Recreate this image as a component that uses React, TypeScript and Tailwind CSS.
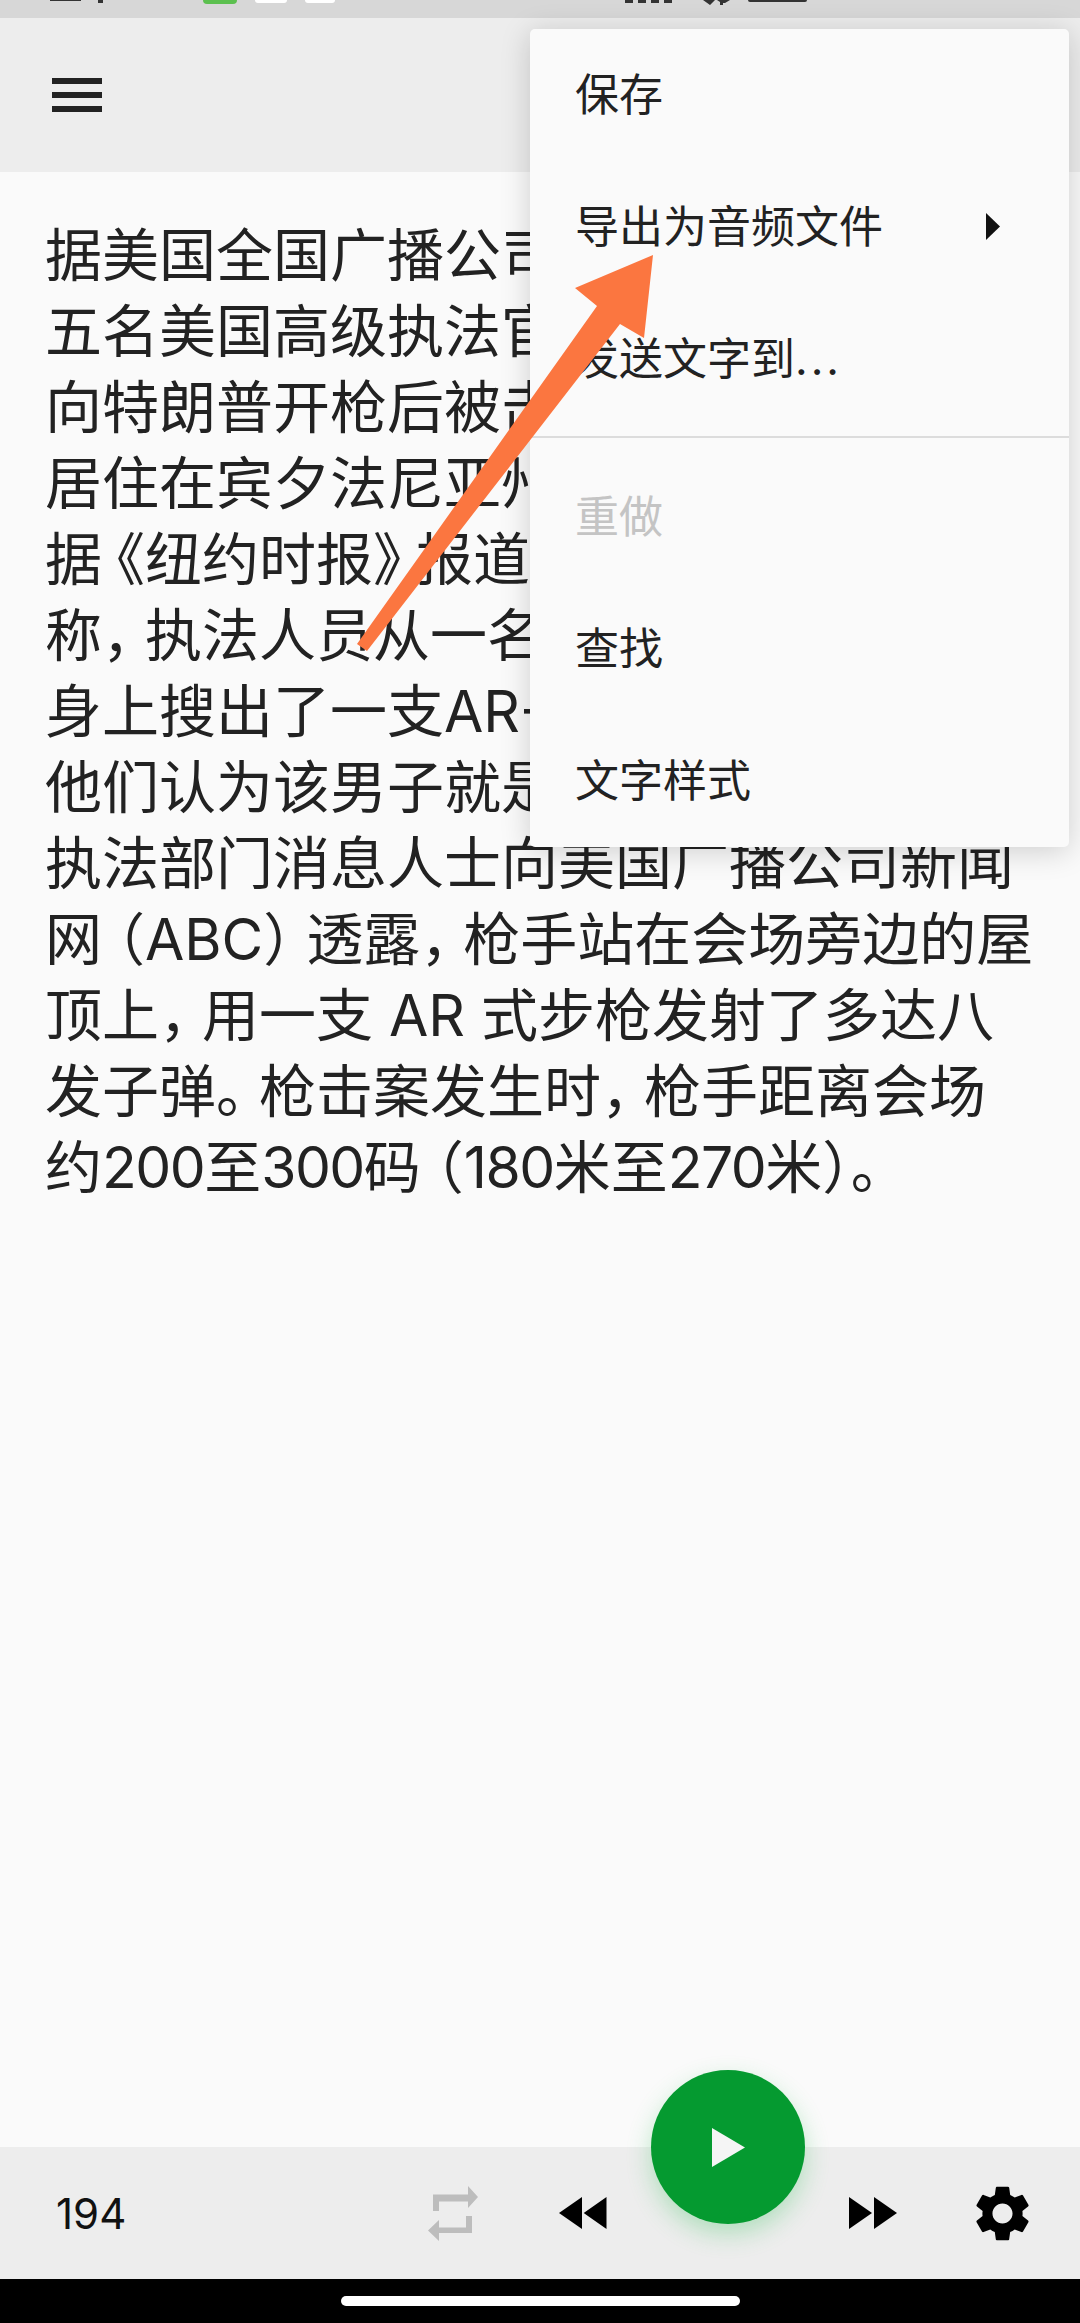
import type { ReactNode } from "react";
import { MdSettings } from "react-icons/md";

// only the part of each line that shows beside the menu
const lines = [
  "据美国全国广播公司",
  "五名美国高级执法官",
  "向特朗普开枪后被击",
  "居住在宾夕法尼亚州",
  "据《纽约时报》报道",
  "称，执法人员从一名",
  "身上搜出了一支AR-",
  "他们认为该男子就是",
  "执法部门消息人士向美国广播公司新闻",
  "网（ABC）透露，枪手站在会场旁边的屋",
  "顶上，用一支 AR 式步枪发射了多达八",
  "发子弹。枪击案发生时，枪手距离会场",
  "约200至300码（180米至270米）。",
];

const font = "font-['Inter','Noto_Sans_CJK_SC',sans-serif]";

// the phone's font sets CJK punctuation and digits tighter than ours
function TextLine({ text }: { text: string }) {
  const parts = text.split(/(）。|[，。《》（）]|\d+)/);
  return (
    <div className="whitespace-nowrap">
      {parts.map((part, i) => {
        if (part === "《" || part === "（") {
          return (
            <span key={i} className="ml-[-14px]">
              {part}
            </span>
          );
        }
        if (part === "，" || part === "。" || part === "》" || part === "）") {
          return (
            <span key={i} className="tracking-[-14px]">
              {part}
            </span>
          );
        }
        if (/^\d+$/.test(part)) {
          return (
            <span key={i} className="tracking-[-1.5px]">
              {part}
            </span>
          );
        }
        return <span key={i}>{part}</span>;
      })}
    </div>
  );
}

function MenuItem({ label, disabled, submenu }: { label: ReactNode; disabled?: boolean; submenu?: boolean }) {
  return (
    <div className={`flex h-[132px] items-center justify-between pl-[45px] pr-[69px] text-[44px] ${disabled ? "text-[#c4c4c4]" : "text-[#222]"}`}>
      <span>{label}</span>
      {submenu && (
        <svg width="14" height="27" viewBox="0 0 14 27" className="mt-[-2px]">
          <path d="M0 0 L14 13.5 L0 27 Z" fill="#111" />
        </svg>
      )}
    </div>
  );
}

function StatusBar() {
  return (
    <div className="flex h-[18px] items-start bg-[#d7d7d7]">
      <div className="ml-[50px] h-[1px] w-[31px] bg-[#333]" />
      <div className="ml-[17px] h-[3px] w-[5px] bg-[#333]" />
      <div className="ml-[100px] h-[4px] w-[34px] rounded-b-[6px] bg-[#5cc04f]" />
      <div className="ml-[18px] h-[3px] w-[32px] rounded-b-[6px] bg-white" />
      <div className="ml-[18px] h-[3px] w-[30px] rounded-b-[6px] bg-white" />
      <div className="ml-[290px] flex w-[47px] justify-between">
        <div className="h-[3px] w-[8px] bg-[#333]" />
        <div className="h-[3px] w-[8px] bg-[#333]" />
        <div className="h-[3px] w-[8px] bg-[#333]" />
        <div className="h-[3px] w-[8px] bg-[#333]" />
      </div>
      <svg width="27" height="5" viewBox="0 0 27 5" className="ml-[31px]">
        <path d="M0 0 H12 L7 5 Z M14 0 H27 L22 3 H20 V5 H17 V2 Z" fill="#333" />
      </svg>
      <div className="ml-[18px] h-[2px] w-[59px] rounded-b-[3px] bg-[#333]" />
    </div>
  );
}

export default function App() {
  return (
    <div className={`relative flex h-[2323px] w-[1080px] flex-col overflow-hidden bg-[#fafafa] ${font}`}>
      <StatusBar />

      {/* toolbar */}
      <div className="flex h-[154px] items-center bg-[#ededed] pl-[52px]">
        <div className="flex w-[50px] flex-col gap-[8px]">
          <div className="h-[6px] bg-[#222]" />
          <div className="h-[6px] bg-[#222]" />
          <div className="h-[6px] bg-[#222]" />
        </div>
      </div>

      {/* text body */}
      <div className="flex-1 pl-[45px] pt-[46px] text-[57px] leading-[76px] text-[#222]">
        {lines.map((line) => (
          <TextLine key={line} text={line} />
        ))}
      </div>

      {/* player bar */}
      <div className="flex h-[132px] items-center bg-[#ededed] pl-[56px]">
        <span className="w-[372px] text-[42px] text-[#111]">194</span>
        <svg width="50" height="55" viewBox="0 0 50 55">
          <path d="M5 8.5 H40 V0 L50 11 L40 22 V15.5 H11 V25 H5 Z" fill="#bdbdbd" />
          <path d="M44 30 V47 H11 V55 L0 44.5 L11 34 V41.5 H38 V30 Z" fill="#bdbdbd" />
        </svg>
        <svg width="48" height="32" viewBox="0 0 48 32" className="ml-[81px]">
          <path d="M23 0 V32 L0 16 Z M47.5 0 V32 L24.7 16 Z" fill="#000" />
        </svg>
        <svg width="48" height="32" viewBox="0 0 48 32" className="ml-[242px]">
          <path d="M0 0 V32 L23 16 Z M25 0 V32 L48 16 Z" fill="#000" />
        </svg>
        <MdSettings size={67} color="#000" className="ml-[72px]" />
      </div>

      {/* gesture bar */}
      <div className="flex h-[44px] justify-center bg-black pt-[17px]">
        <div className="h-[10px] w-[399px] rounded-full bg-white" />
      </div>

      {/* play button */}
      <div className="absolute left-[651px] top-[2070px] flex h-[154px] w-[154px] items-center justify-center rounded-full bg-[#059a30] shadow-[0_10px_24px_rgba(40,190,80,0.3)]">
        <svg width="33" height="39" viewBox="0 0 33 39">
          <path d="M0 0 L33 19.5 L0 39 Z" fill="#f5f5f5" />
        </svg>
      </div>

      {/* dropdown menu */}
      <div className="absolute left-[530px] top-[29px] w-[539px] rounded-[5px] bg-[#fafafa] shadow-[0_4px_30px_rgba(0,0,0,0.18)]">
        <MenuItem label="保存" />
        <MenuItem label="导出为音频文件" submenu />
        <MenuItem
          label={
            <>
              发送文字到<span className="tracking-[3px]">...</span>
            </>
          }
        />
        <div className="mb-[13px] mt-[11px] h-[2px] bg-[#dcdcdc]" />
        <MenuItem label="重做" disabled />
        <MenuItem label="查找" />
        <MenuItem label="文字样式" />
      </div>

      {/* annotation arrow */}
      <svg className="absolute left-0 top-0" width="1080" height="2323" viewBox="0 0 1080 2323">
        <path d="M653 255 L575 288 L597 306 L357 644 L367 651 L620 324 L644 338 Z" fill="#fb7640" />
      </svg>
    </div>
  );
}
